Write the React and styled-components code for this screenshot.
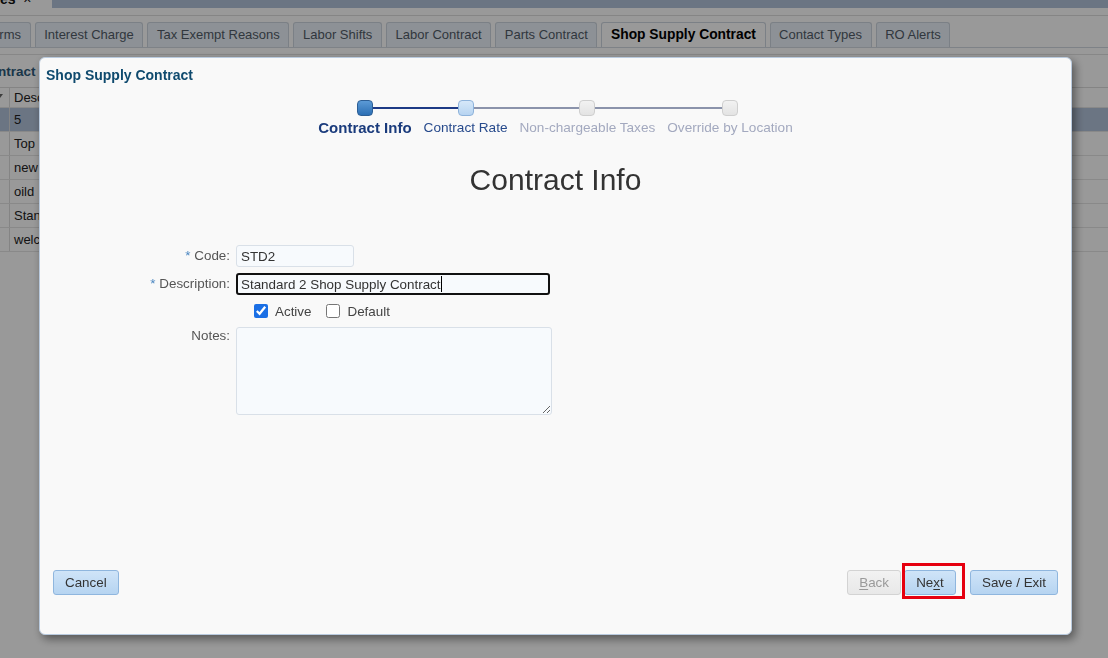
import React from "react";
import styled, { createGlobalStyle } from "styled-components";

const GlobalStyle = createGlobalStyle`
  html, body {
    margin: 0;
    padding: 0;
  }
  body {
    width: 1108px;
    height: 658px;
    overflow: hidden;
    background: #fff;
    font-family: "Liberation Sans", Arial, sans-serif;
    font-size: 13px;
    color: #333;
  }
`;

const tabs = [
  "Terms",
  "Interest Charge",
  "Tax Exempt Reasons",
  "Labor Shifts",
  "Labor Contract",
  "Parts Contract",
  "Shop Supply Contract",
  "Contact Types",
  "RO Alerts",
];

const rows = ["5", "Top", "new", "oild", "Stan", "welc"];

const steps = [
  { label: "Contract Info", state: "current" },
  { label: "Contract Rate", state: "next" },
  { label: "Non-chargeable Taxes", state: "todo" },
  { label: "Override by Location", state: "todo" },
];

const App = () => {
  return (
    <>
      <GlobalStyle />
      <Page>
        <TopBar>
          <DocTab>
            <span>
              <b>es</b> &nbsp;×
            </span>
          </DocTab>
        </TopBar>
        <ThinRule />
        <TabStrip>
          {tabs.map((t) => (
            <Tab key={t} $active={t === "Shop Supply Contract"}>
              {t}
            </Tab>
          ))}
        </TabStrip>
        <SubBar />
        <PanelTitle>Contract</PanelTitle>
        <Grid>
          <GridRow $header>
            <SortCell>
              <svg width="6" height="5" viewBox="0 0 6 5">
                <polygon points="0,0 6,0 3,4" fill="#666" />
              </svg>
            </SortCell>
            <TextCell $header>Desc</TextCell>
          </GridRow>
          {rows.map((r, i) => (
            <GridRow key={r} $selected={i === 0}>
              <SortCell />
              <TextCell>{r}</TextCell>
            </GridRow>
          ))}
        </Grid>
      </Page>

      <Backdrop />

      <Dialog>
        <DialogTitle>Shop Supply Contract</DialogTitle>

        <Stepper>
          {steps.map((s, i) => (
            <Step
              key={s.label}
              $first={i === 0}
              $last={i === steps.length - 1}
              $leftDone={i === 1}
              $rightDone={i === 0}
            >
              <Dot $state={s.state} />
              <StepLabel $state={s.state}>{s.label}</StepLabel>
            </Step>
          ))}
        </Stepper>

        <Heading>Contract Info</Heading>

        <Form>
          <Label>
            <Req>*</Req> Code:
          </Label>
          <Field>
            <TextInput readOnly value="STD2" $width={118} />
          </Field>

          <Label>
            <Req>*</Req> Description:
          </Label>
          <Field>
            <TextInput
              readOnly
              value="Standard 2 Shop Supply Contract"
              $width={314}
              $focused
            />
            <Caret />
          </Field>

          <CheckRow>
            <CheckItem>
              <CheckBox type="checkbox" defaultChecked />
              Active
            </CheckItem>
            <CheckItem>
              <CheckBox type="checkbox" />
              Default
            </CheckItem>
          </CheckRow>

          <Label $top>Notes:</Label>
          <Field>
            <Notes />
          </Field>
        </Form>

        <Footer>
          <Button>Cancel</Button>
          <ButtonGroup>
            <NavGroup>
              <Button $disabled>
                <u>B</u>ack
              </Button>
              <Marked>
                <Button>
                  Ne<u>x</u>t
                </Button>
                <Highlight />
              </Marked>
            </NavGroup>
            <Button>Save / Exit</Button>
          </ButtonGroup>
        </Footer>
      </Dialog>
    </>
  );
};

/* underlying page */
const Page = styled.div`
  width: 1108px;
  height: 658px;
  overflow: hidden;
  background: #fff;
`;
const TopBar = styled.div`
  height: 8px;
  background: #b3c3da;
  display: flex;
`;
const DocTab = styled.div`
  width: 52px;
  height: 8px;
  overflow: hidden;
  background: #fff;
  display: flex;
  align-items: flex-end;
  span {
    line-height: 18px;
    white-space: nowrap;
    color: #111;
    font-size: 14px;
  }
`;
const ThinRule = styled.div`
  margin-top: 7px;
  height: 1px;
  background: #dedede;
`;
const TabStrip = styled.div`
  display: flex;
  gap: 4px;
  margin-left: -24px;
  padding-top: 6px;
  border-bottom: 1px solid #d2d9e1;
`;
const Tab = styled.div`
  height: 25px;
  box-sizing: border-box;
  padding: 0 8.6px;
  line-height: 24px;
  white-space: nowrap;
  border: 1px solid #cdd5df;
  border-bottom: none;
  border-radius: 3px 3px 0 0;
  background: ${(p) => (p.$active ? "#ffffff" : "#ebf2fa")};
  color: ${(p) => (p.$active ? "#000" : "#525c68")};
  font-weight: ${(p) => (p.$active ? "bold" : "normal")};
  font-size: ${(p) => (p.$active ? "13.8px" : "13px")};
`;
const SubBar = styled.div`
  height: 6px;
  border-bottom: 1px solid #e2e2e2;
`;
const PanelTitle = styled.div`
  margin: 9px 0 0 -20px;
  line-height: 16px;
  font-size: 13.5px;
  font-weight: bold;
  color: #2d5a7b;
`;
const Grid = styled.div`
  margin-top: 7px;
  border-top: 1px solid #dcdcdc;
`;
const GridRow = styled.div`
  display: flex;
  height: ${(p) => (p.$header ? "20px" : "24px")};
  box-sizing: border-box;
  border-bottom: 1px solid #e4e4e4;
  background: ${(p) => (p.$selected ? "#b3c3da" : "#fff")};
  color: #222;
`;
const SortCell = styled.div`
  width: 10px;
  box-sizing: border-box;
  border-right: 1px solid #dcdcdc;
  svg {
    display: block;
    margin: 6px 0 0 -3px;
  }
`;
const TextCell = styled.div`
  padding-left: 4px;
  line-height: ${(p) => (p.$header ? "20px" : "23px")};
`;

/* modal */
const Backdrop = styled.div`
  position: fixed;
  inset: 0;
  background: rgba(0, 0, 0, 0.4);
`;
const Dialog = styled.div`
  position: fixed;
  left: 39px;
  top: 57px;
  width: 1033px;
  height: 578px;
  box-sizing: border-box;
  display: flex;
  flex-direction: column;
  background: #f9f9f9;
  border: 1px solid #b9cade;
  border-radius: 6px;
  box-shadow: 3px 4px 10px rgba(0, 0, 0, 0.45);
`;
const DialogTitle = styled.div`
  padding: 9px 6px 0;
  line-height: 16px;
  font-size: 14px;
  font-weight: bold;
  color: #0f4a6e;
`;
const Stepper = styled.div`
  margin-top: 17px;
  display: flex;
  justify-content: center;
  gap: 12px;
`;
const Step = styled.div`
  position: relative;
  display: flex;
  flex-direction: column;
  align-items: center;
  &::before,
  &::after {
    content: "";
    position: absolute;
    top: 7px;
    height: 2px;
  }
  &::before {
    display: ${(p) => (p.$first ? "none" : "block")};
    left: -6px;
    right: 50%;
    background: ${(p) => (p.$leftDone ? "#1d3a86" : "#8b93ab")};
  }
  &::after {
    display: ${(p) => (p.$last ? "none" : "block")};
    left: 50%;
    right: -6px;
    background: ${(p) => (p.$rightDone ? "#1d3a86" : "#8b93ab")};
  }
`;
const dotStyles = {
  current: "background: linear-gradient(#5b9ad6, #2c6fb4); border-color: #2d5f96;",
  next: "background: linear-gradient(#d6e8f9, #b7d4f1); border-color: #8eb3db;",
  todo: "background: linear-gradient(#f2f2f2, #e3e3e3); border-color: #cfcfcf;",
};
const Dot = styled.div`
  position: relative;
  z-index: 1;
  width: 16px;
  height: 16px;
  box-sizing: border-box;
  border: 1px solid;
  border-radius: 4px;
  ${(p) => dotStyles[p.$state]}
`;
const StepLabel = styled.div`
  margin-top: 4px;
  line-height: 16px;
  white-space: nowrap;
  font-size: ${(p) => (p.$state === "current" ? "15px" : "13.6px")};
  font-weight: ${(p) => (p.$state === "current" ? "bold" : "normal")};
  color: ${(p) =>
    p.$state === "current" ? "#1a3b7c" : p.$state === "next" ? "#274a8c" : "#a3a9bf"};
`;
const Heading = styled.h1`
  margin: 26px 0 0;
  text-align: center;
  font-size: 30px;
  line-height: 36px;
  font-weight: normal;
  color: #333;
`;
const Form = styled.div`
  margin-top: 47px;
  display: grid;
  grid-template-columns: 190px 316px;
  column-gap: 6px;
  row-gap: 6px;
`;
const Label = styled.div`
  text-align: right;
  color: #555;
  font-size: 13.4px;
  line-height: ${(p) => (p.$top ? "16px" : "22px")};
  padding-top: ${(p) => (p.$top ? "1px" : "0")};
  white-space: nowrap;
`;
const Req = styled.span`
  color: #4a86c0;
`;
const Field = styled.div`
  position: relative;
`;
const TextInput = styled.input`
  display: block;
  width: ${(p) => p.$width}px;
  height: 22px;
  box-sizing: border-box;
  margin: 0;
  padding: 0 ${(p) => (p.$focused ? "3px" : "4px")};
  font: inherit;
  font-size: 13.4px;
  color: #333;
  background: #f7fafd;
  border: ${(p) => (p.$focused ? "2px solid #111" : "1px solid #d9e0e8")};
  border-radius: 3px;
  outline: none;
`;
const Caret = styled.span`
  position: absolute;
  left: 205px;
  top: 3px;
  width: 1px;
  height: 16px;
  background: #000;
`;
const CheckRow = styled.div`
  grid-column: 2;
  height: 20px;
  display: flex;
  align-items: center;
  gap: 15px;
  padding-left: 18px;
`;
const CheckItem = styled.label`
  display: flex;
  align-items: center;
  gap: 7px;
  color: #444;
  font-size: 13.4px;
`;
const CheckBox = styled.input`
  width: 14px;
  height: 14px;
  margin: 0;
  accent-color: #1a6fe5;
`;
const Notes = styled.textarea`
  display: block;
  width: 316px;
  height: 88px;
  box-sizing: border-box;
  margin: 0;
  padding: 4px;
  font: inherit;
  background: #f7fafd;
  border: 1px solid #d9e0e8;
  border-radius: 3px;
  outline: none;
  resize: both;
`;
const Footer = styled.div`
  margin-top: auto;
  display: flex;
  justify-content: space-between;
  align-items: center;
  padding: 0 13px 39px;
`;
const ButtonGroup = styled.div`
  display: flex;
  gap: 14px;
`;
const NavGroup = styled.div`
  display: flex;
  gap: 3px;
`;
const Marked = styled.div`
  position: relative;
`;
const Highlight = styled.div`
  position: absolute;
  left: -2px;
  top: -7px;
  width: 63px;
  height: 36px;
  box-sizing: border-box;
  border: 3px solid #e6000f;
  pointer-events: none;
`;
const Button = styled.button`
  height: 25px;
  min-width: 52px;
  padding: 0 11px;
  box-sizing: border-box;
  font: inherit;
  font-size: 13.4px;
  line-height: 23px;
  border-radius: 3px;
  border: 1px solid ${(p) => (p.$disabled ? "#d3d3d3" : "#8fb6de")};
  background: ${(p) =>
    p.$disabled
      ? "linear-gradient(#f2f2f2, #e8e8e8)"
      : "linear-gradient(#cfe4f8, #b6d4f1)"};
  color: ${(p) => (p.$disabled ? "#9a9a9a" : "#333")};
  u {
    text-underline-offset: 2px;
  }
`;

export default App;
